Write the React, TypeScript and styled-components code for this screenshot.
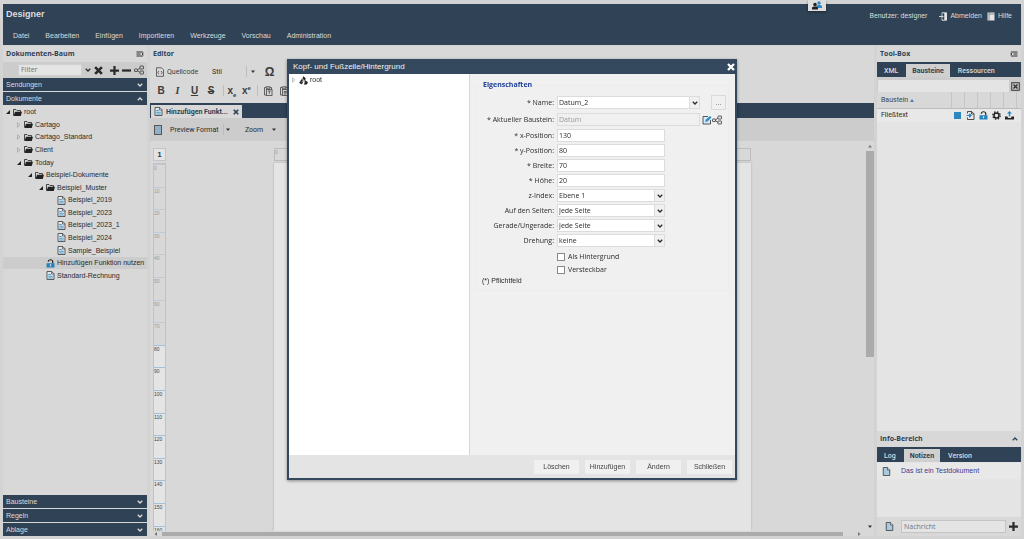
import React from "react";
import styled, { createGlobalStyle, css } from "styled-components";

const navy = "#2f4256";
const ink = "#2b2b2b";
const panel = "#d8d8d8";
const shade = "#cccccc";
const light = "#e4e4e4";
const arial = '"Liberation Sans", Arial, sans-serif';
const humanist = '"Open Sans", "Noto Sans", sans-serif';
const roboto = 'Roboto, "Liberation Sans", sans-serif';

const GlobalStyle = createGlobalStyle`
  * { box-sizing: border-box; }
  html, body { margin: 0; background: #d3d3d3; }
  body { font: 7px/10px ${arial}; color: ${ink}; overflow: hidden; }
  button, input, select { font: inherit; color: inherit; margin: 0; border-radius: 0; }
  svg { display: block; flex: none; }
  h1, h2, h3, p, ul { margin: 0; padding: 0; font-size: inherit; }
`;

/* ---------- icons ---------- */
type IconProps = { size?: number };

const Chevron = ({ up, size = 6 }: IconProps & { up?: boolean }) => (
  <svg width={size} height={size} viewBox="0 0 12 12" fill="none" stroke="currentColor" strokeWidth="2.6">
    <path d={up ? "M1.500 8.500l4.500-4.500 4.500 4.500" : "M1.500 3.500l4.500 4.500 4.500-4.500"} />
  </svg>
);
const Cross = ({ size = 8 }: IconProps) => (
  <svg width={size} height={size} viewBox="0 0 16 16" fill="none" stroke="currentColor" strokeWidth="4.6">
    <path d="M2 2l12 12M14 2L2 14" />
  </svg>
);
const Plus = ({ size = 9 }: IconProps) => (
  <svg width={size} height={size} viewBox="0 0 16 16" fill="currentColor">
    <path d="M6 0h4v6h6v4h-6v6H6v-6H0V6h6z" />
  </svg>
);
const Minus = ({ size = 9 }: IconProps) => (
  <svg width={size} height={size} viewBox="0 0 16 16" fill="currentColor">
    <path d="M0 6h16v4H0z" />
  </svg>
);
const Share = ({ size = 10 }: IconProps) => (
  <svg width={size} height={size} viewBox="0 0 20 20" fill="none" stroke="#444" strokeWidth="1.8">
    <rect x="1" y="8" width="6" height="5" rx="1" />
    <rect x="12" y="2" width="7" height="6" rx="1" />
    <rect x="12" y="12" width="7" height="6" rx="1" />
    <path d="M7 10l5-4M7 11l5 4" />
  </svg>
);
const Collapse = ({ flip }: { flip?: boolean }) => (
  <svg width="8" height="8" viewBox="0 0 16 16" fill="none" stroke="#222" strokeWidth="1.8">
    <g transform={flip ? "translate(16 0) scale(-1 1)" : undefined}>
      <path d="M1 4h13M1 8h8M1 12h13" />
      <path d="M15 6l-3 2 3 2" />
    </g>
  </svg>
);
const Folder = () => (
  <svg width="9" height="9" viewBox="0 0 18 18">
    <path d="M1 15V3h5l2 2h7v3" fill="none" stroke="#222" strokeWidth="1.6" />
    <path d="M4 7.500H18L15.500 16H1z" fill="#222" />
  </svg>
);
const Doc = ({ size = 9 }: IconProps) => (
  <svg width={size} height={size} viewBox="0 0 18 18">
    <path d="M2 1h9.500L16 5.500V17H2z" fill="#e2e8ec" stroke="#444" strokeWidth="1.7" />
    <path d="M11 1v5h5" fill="none" stroke="#444" strokeWidth="1.4" />
    <path d="M4.500 7h5M4.500 10.500h9M4.500 14h9" stroke="#4a97c9" strokeWidth="2" />
  </svg>
);
const Sheet = ({ size = 9 }: IconProps) => (
  <svg width={size} height={size} viewBox="0 0 18 18">
    <path d="M2.500 1h8.500l4.500 4.500V17h-13z" fill="#a9c9df" stroke="#444" strokeWidth="1.7" />
    <path d="M11 1v5h5" fill="#e4e4e4" stroke="#444" strokeWidth="1.4" />
  </svg>
);
const Lock = ({ size = 9 }: IconProps) => (
  <svg width={size} height={size} viewBox="0 0 18 18">
    <path d="M4.500 5.500a4.500 4 0 0 1 9 0V9" fill="none" stroke="#222" strokeWidth="2.400" />
    <path d="M1 8.500h16V17H1z" fill="#2583bd" />
    <path d="M9 10.500v4" stroke="#e4e4e4" strokeWidth="2.400" />
  </svg>
);
const Twist = ({ open }: { open: boolean }) => (
  <svg width="6" height="6" viewBox="0 0 12 12">
    {open ? <path d="M10 2v8H2z" fill="#222" /> : <path d="M3 1.500l5 4.500-5 4.500z" fill="none" stroke="#999" strokeWidth="1.2" />}
  </svg>
);
const Caret = () => (
  <svg width="4" height="3" viewBox="0 0 8 6"><path d="M0 1h8L4 6z" fill="#333" /></svg>
);

/* ---------- page frame ---------- */
const Page = styled.div`
  height: 100vh;
  display: flex;
  flex-direction: column;
  gap: 1px;
  padding: 4px 3px 3px;
`;
const Header = styled.header`
  flex: none;
  height: 41px;
  background: ${navy};
  color: #dcdcdc;
  display: flex;
  justify-content: space-between;
`;
const Brand = styled.h1`
  font: bold 9px/12px ${arial};
  padding: 4px 3px 11px;
`;
const Menu = styled.nav`
  display: flex;
  gap: 16px;
  padding-left: 10px;
`;
const HeadLink = styled.a`
  display: flex;
  align-items: center;
  gap: 3px;
  color: inherit;
  text-decoration: none;
`;
const UserBar = styled.div`
  display: flex;
  height: 10px;
  align-items: center;
  gap: 5px;
  margin: 7px 9px 0 0;
`;
const UserName = styled.span`
  margin-right: 7px;
  font-family: ${roboto};
`;
const Presence = styled.div`
  position: absolute;
  top: 0;
  right: 198px;
  width: 18px;
  height: 11px;
  display: grid;
  place-items: center;
  background: #dedede;
  box-shadow: 0 1px 2px #1118;
`;
const Columns = styled.main`
  flex: 1;
  min-height: 0;
  display: grid;
  grid-template-columns: 144px minmax(0, 1fr) 144px;
  gap: 3px;
`;
const Column = styled.section`
  display: flex;
  flex-direction: column;
  min-height: 0;
  min-width: 0;
  background: ${panel};
`;
const PanelTitle = styled.h2`
  flex: none;
  height: 16px;
  display: flex;
  align-items: center;
  justify-content: space-between;
  padding: 0 3px;
  color: ${navy};
  font: bold 7px/10px ${humanist};
`;
const IconButton = styled.button`
  flex: none;
  border: 0;
  padding: 0;
  background: none;
  display: grid;
  place-items: center;
`;

/* ---------- document tree ---------- */
const FilterBar = styled.div`
  flex: none;
  height: 16px;
  display: flex;
  align-items: center;
  gap: 3px;
  padding: 0 3px 0 15px;
  background: ${shade};
`;
const ClearButton = styled(IconButton)`
  margin-right: 4px;
`;
const FilterInput = styled.input`
  flex: 1;
  min-width: 0;
  height: 12px;
  margin-bottom: 1px;
  padding: 0 2px;
  border: 1px solid #d0d0d0;
  background: ${light};
  font-family: ${humanist};
`;
const AccordionHead = styled.button`
  flex: none;
  height: 13px;
  margin-bottom: 1px;
  padding: 0 4px 0 3px;
  border: 0;
  display: flex;
  align-items: center;
  justify-content: space-between;
  background: ${navy};
  color: #dcdcdc;
  &:last-child { margin-bottom: 0; }
`;
const TreeArea = styled.div`
  flex: 1;
  min-height: 0;
  overflow: hidden;
`;
const Tree = styled.ul`
  list-style: none;
  display: grid;
  height: 176px;
  grid-auto-rows: 1fr;
`;
const TreeRow = styled.li<{ $level: number; $active?: boolean }>`
  display: flex;
  align-items: center;
  gap: 2px;
  padding-left: ${(p) => 2 + p.$level * 11}px;
  white-space: nowrap;
  background: ${(p) => (p.$active ? "#cccccc" : "none")};
`;
const TwistSlot = styled.span`
  flex: none;
  width: 6px;
`;

type Node = { label: string; level: number; kind: "open" | "closed" | "doc" | "lock" };
const nodes: Node[] = [
  { label: "root", level: 0, kind: "open" },
  { label: "Cartago", level: 1, kind: "closed" },
  { label: "Cartago_Standard", level: 1, kind: "closed" },
  { label: "Client", level: 1, kind: "closed" },
  { label: "Today", level: 1, kind: "open" },
  { label: "Beispiel-Dokumente", level: 2, kind: "open" },
  { label: "Beispiel_Muster", level: 3, kind: "open" },
  { label: "Beispiel_2019", level: 4, kind: "doc" },
  { label: "Beispiel_2023", level: 4, kind: "doc" },
  { label: "Beispiel_2023_1", level: 4, kind: "doc" },
  { label: "Beispiel_2024", level: 4, kind: "doc" },
  { label: "Sample_Beispiel", level: 4, kind: "doc" },
  { label: "Hinzufügen Funktion nutzen", level: 3, kind: "lock" },
  { label: "Standard-Rechnung", level: 3, kind: "doc" },
];

const DocumentTree = () => (
  <Column>
    <PanelTitle>Dokumenten-Baum<Collapse /></PanelTitle>
    <FilterBar>
      <FilterInput placeholder="Filter" aria-label="Filter" />
      <IconButton aria-label="Optionen"><Chevron /></IconButton>
      <ClearButton aria-label="Leeren"><Cross size={9} /></ClearButton>
      <IconButton aria-label="Aufklappen"><Plus /></IconButton>
      <IconButton aria-label="Zuklappen"><Minus /></IconButton>
      <IconButton aria-label="Struktur"><Share /></IconButton>
    </FilterBar>
    <AccordionHead>Sendungen<Chevron /></AccordionHead>
    <AccordionHead>Dokumente<Chevron up /></AccordionHead>
    <TreeArea>
      <Tree>
        {nodes.map((n) => (
          <TreeRow key={n.label} $level={n.level} $active={n.kind === "lock"}>
            <TwistSlot>{(n.kind === "open" || n.kind === "closed") && <Twist open={n.kind === "open"} />}</TwistSlot>
            {n.kind === "doc" ? <Doc /> : n.kind === "lock" ? <Lock /> : <Folder />}
            {n.label}
          </TreeRow>
        ))}
      </Tree>
    </TreeArea>
    {["Bausteine", "Regeln", "Ablage"].map((t) => (
      <AccordionHead key={t}>{t}<Chevron /></AccordionHead>
    ))}
  </Column>
);

/* ---------- editor ---------- */
const Ribbon = styled.div`
  flex: none;
  height: 41px;
  display: grid;
  grid-template-rows: 19px 19px;
  font-family: ${roboto};
`;
const RibbonRow = styled.div`
  display: flex;
  align-items: center;
  padding-left: 5px;
`;
const Tool = styled.button<{ $w?: number; $start?: boolean }>`
  width: ${(p) => (p.$w ? p.$w + "px" : "auto")};
  flex: none;
  border: 0;
  padding: 0;
  background: none;
  display: flex;
  align-items: center;
  justify-content: ${(p) => (p.$w && !p.$start ? "center" : "flex-start")};
  gap: 2px;
  color: #3c3c3c;
  white-space: nowrap;
`;
const Glyph = styled.span<{ $style?: "bold" | "italic" | "under" | "strike" }>`
  font: bold 10px/12px ${arial};
  ${(p) => p.$style === "italic" && css`font-family: "Liberation Serif", serif; font-style: italic;`}
  ${(p) => p.$style === "under" && css`text-decoration: underline;`}
  ${(p) => p.$style === "strike" && css`text-decoration: line-through;`}
  sub, sup { font-size: 6px; line-height: 0; }
`;
const Omega = styled.span`
  font: bold 12px/12px ${arial};
`;
const Divider = styled.span`
  flex: none;
  width: 1px;
  height: 11px;
  margin: 0 2px;
  background: #bdbdbd;
`;
const StyleName = styled.span`
  width: 32px;
  margin-left: 13px;
`;
const TabStrip = styled.div`
  flex: none;
  height: 15px;
  display: flex;
  padding: 2px 0 0 1px;
  background: ${navy};
`;
const DocTab = styled.div`
  display: flex;
  align-items: center;
  gap: 3px;
  width: 91px;
  padding: 0 3px;
  background: ${panel};
  color: ${navy};
  font: bold 7px/10px ${roboto};
  white-space: nowrap;
`;
const TabText = styled.span`
  flex: 1;
`;
const ViewBar = styled.div`
  flex: none;
  height: 23px;
  display: flex;
  align-items: center;
  padding-left: 4px;
  background: ${shade};
  font-family: ${roboto};
`;
const ViewLabel = styled.span<{ $w: number; $before: number }>`
  width: ${(p) => p.$w}px;
  margin-left: ${(p) => p.$before}px;
  white-space: nowrap;
`;
const Workspace = styled.div`
  flex: 1;
  min-height: 0;
  display: grid;
  grid-template: minmax(0, 1fr) 5px / minmax(0, 1fr) 9px;
`;
const Canvas = styled.div`
  display: grid;
  grid-template: 13px minmax(0, 1fr) / 13px minmax(0, 477px);
  gap: 2px 108px;
  padding: 7px 0 0 3px;
  overflow: hidden;
`;
const PageNumber = styled.div`
  display: grid;
  place-items: center;
  background: ${light};
  border: 1px solid #c4c4c4;
  color: ${navy};
  font: bold 8px/10px ${arial};
`;
const RulerX = styled.div`
  border: 1px solid #bcbcbc;
  color: #999;
  font-size: 5px;
  line-height: 6px;
`;
const RulerY = styled.ol`
  margin: 0;
  padding: 0;
  list-style: none;
  height: 386px;
  display: flex;
  flex-direction: column;
  border: 1px solid #c2c2c2;
`;
const Tick = styled.li<{ $on: boolean }>`
  flex: 1;
  border-top: 1px solid ${(p) => (p.$on ? "#a3c1dd" : "#bccbd9")};
  background: ${(p) => (p.$on ? light : "none")};
  color: ${(p) => (p.$on ? "#444" : "#999")};
  font-size: 5px;
  line-height: 6px;
`;
const Paper = styled.div`
  background: ${light};
  box-shadow: 0 0 2px #8888;
`;
const ScrollY = styled.div`
  display: flex;
  flex-direction: column;
  align-items: center;
  justify-content: space-between;
  padding: 4px 0 3px;
`;
const ThumbY = styled.div`
  width: 8px;
  height: 206px;
  margin: 3px 0 auto;
  background: #ababab;
`;
const ScrollX = styled.div`
  display: flex;
  align-items: center;
  justify-content: space-between;
  gap: 4px;
  padding: 0 4px;
`;
const ThumbX = styled.div`
  flex: 1;
  height: 4px;
  margin-right: 10px;
  background: #ababab;
`;
const ScrollArrow = ({ d }: { d: string }) => (
  <svg width="4" height="4" viewBox="0 0 8 8"><path d={d} fill="#777" /></svg>
);
const Clipboard = ({ text }: { text?: boolean }) => (
  <svg width="10" height="10" viewBox="0 0 20 20" fill="none" stroke="#555" strokeWidth="1.8">
    <path d="M6 3H3v15h3M14 3h3v3M6 1.500h8v3H6z" />
    <rect x="7" y="7" width="11" height="12" />
    {text ? <path d="M9.500 10h6M12.500 10v6" /> : <path d="M9.500 11h6M9.500 13.500h6M9.500 16h4" />}
  </svg>
);

const Editor = () => (
  <Column>
    <PanelTitle>Editor</PanelTitle>
    <Ribbon>
      <RibbonRow>
        <Tool $w={44} $start>
          <svg width="10" height="10" viewBox="0 0 20 20" fill="none" stroke="#555" strokeWidth="1.8">
            <path d="M3 1.500h10l4 4v13H3zM8 8l-2.500 3L8 14M12 8l2.500 3L12 14" />
          </svg>
          Quellcode
        </Tool>
        <StyleName>Stil</StyleName>
        <Divider />
        <Tool $w={8}><Caret /></Tool>
        <Tool $w={25}><Omega>Ω</Omega></Tool>
      </RibbonRow>
      <RibbonRow>
        <Tool $w={12}><Glyph>B</Glyph></Tool>
        <Tool $w={21}><Glyph $style="italic">I</Glyph></Tool>
        <Tool $w={13}><Glyph $style="under">U</Glyph></Tool>
        <Tool $w={20}><Glyph $style="strike">S</Glyph></Tool>
        <Divider />
        <Tool $w={12}><Glyph>x<sub>e</sub></Glyph></Tool>
        <Tool $w={17}><Glyph>x<sup>e</sup></Glyph></Tool>
        <Divider />
        <Tool $w={16}><Clipboard text /></Tool>
        <Tool $w={16}><Clipboard /></Tool>
      </RibbonRow>
    </Ribbon>
    <TabStrip>
      <DocTab>
        <Doc />
        <TabText>Hinzufügen Funkt...</TabText>
        <IconButton aria-label="Tab schließen"><Cross size={6} /></IconButton>
      </DocTab>
    </TabStrip>
    <ViewBar>
      <svg width="8" height="10" viewBox="0 0 16 20">
        <rect x="1" y="1" width="14" height="18" fill="#8fb0c8" stroke="#555" strokeWidth="2" />
      </svg>
      <ViewLabel $w={51} $before={8}>Preview Format</ViewLabel>
      <Divider />
      <Tool aria-label="Format wählen"><Caret /></Tool>
      <ViewLabel $w={27} $before={15}>Zoom</ViewLabel>
      <Tool aria-label="Zoom wählen"><Caret /></Tool>
    </ViewBar>
    <Workspace>
      <Canvas>
        <PageNumber>1</PageNumber>
        <RulerX>0</RulerX>
        <RulerY>
          {Array.from({ length: 17 }, (_, i) => (
            <Tick key={i} $on={i >= 8}>{i * 10}</Tick>
          ))}
        </RulerY>
        <Paper />
      </Canvas>
      <ScrollY>
        <svg width="4" height="3" viewBox="0 0 8 6"><path d="M0 5h8L4 0z" fill="#777" /></svg>
        <ThumbY />
        <Caret />
      </ScrollY>
      <ScrollX>
        <ScrollArrow d="M6 0v8L1 4z" />
        <ThumbX />
        <ScrollArrow d="M2 0v8l5-4z" />
      </ScrollX>
    </Workspace>
  </Column>
);

/* ---------- toolbox ---------- */
const Tabs = styled.div`
  flex: none;
  height: 15px;
  display: flex;
  gap: 2px;
  padding: 2px 0 0 1px;
  background: ${navy};
`;
const Tab = styled.button<{ $active?: boolean }>`
  border: 0;
  padding: 0 6px;
  background: ${(p) => (p.$active ? "#d0d0d0" : "none")};
  color: ${(p) => (p.$active ? navy : "#dcdcdc")};
  font: ${(p) => (p.$active ? "bold" : 500)} 7px/10px ${roboto};
`;
const SearchRow = styled.div`
  flex: none;
  display: flex;
  align-items: center;
  justify-content: space-between;
  height: 15px;
  padding: 3px 1px 0;
  background: ${shade};
`;
const Search = styled.input`
  flex: 1;
  min-width: 0;
  height: 12px;
  margin-right: 2px;
  border: 0;
  background: ${light};
`;
const BlockTable = styled.table`
  flex: none;
  width: 100%;
  border-collapse: collapse;
  table-layout: fixed;
  font-family: ${roboto};
  th { height: 16px; padding: 0; font-weight: normal; text-align: left; background: ${panel}; color: #444; border-bottom: 1px solid #bbb; }
  th + th { border-left: 1px solid #c6c6c6; }
  td { height: 14px; padding: 0; background: #e8e8e8; }
  th:first-child, td:first-child { padding-left: 4px; }
  td svg { margin: 0 auto; }
`;
const ColName = styled.col`
  width: 74px;
`;
const ColEnd = styled.col`
  width: 5px;
`;
const Sort = styled.span`
  display: inline-block;
  margin-left: 2px;
  border: 2px solid transparent;
  border-top: 0;
  border-bottom: 3px solid #4a7fb5;
`;
const Blank = styled.div`
  flex: 1;
  background: ${light};
`;
const Note = styled.div`
  flex: none;
  display: flex;
  align-items: center;
  gap: 10px;
  height: 16px;
  margin-top: 1px;
  padding-left: 5px;
  background: #e8e8e8;
  color: #43388f;
`;
const InfoBody = styled.div`
  flex: none;
  display: flex;
  flex-direction: column;
  height: 55px;
  background: ${light};
`;
const MessageRow = styled.div`
  flex: none;
  display: flex;
  align-items: center;
  height: 19px;
  padding: 0 3px 0 8px;
`;
const MessageInput = styled.input`
  flex: 1;
  min-width: 0;
  height: 13px;
  margin: 0 3px 0 7px;
  padding: 0 2px;
  border: 1px solid #c4c4c4;
  background: ${light};
  font-family: ${humanist};
`;

const ToolBox = () => (
  <Column>
    <PanelTitle>Tool-Box<Collapse flip /></PanelTitle>
    <Tabs>
      <Tab>XML</Tab>
      <Tab $active>Bausteine</Tab>
      <Tab>Ressourcen</Tab>
    </Tabs>
    <SearchRow>
      <Search aria-label="Baustein suchen" />
      <IconButton aria-label="Suche leeren">
        <svg width="9" height="9" viewBox="0 0 18 18" fill="none" stroke="#333">
          <rect x="1.500" y="1.500" width="15" height="15" strokeWidth="2" />
          <path d="M5 5l8 8M13 5l-8 8" strokeWidth="3" />
        </svg>
      </IconButton>
    </SearchRow>
    <BlockTable>
      <colgroup><ColName /><col /><col /><col /><col /><col /><ColEnd /></colgroup>
      <thead>
        <tr><th>Baustein<Sort /></th><th /><th /><th /><th /><th /><th /></tr>
      </thead>
      <tbody>
        <tr>
          <td>Fließtext</td>
          <td><svg width="7" height="7"><rect width="7" height="7" fill="#2f86bf" /></svg></td>
          <td>
            <svg width="9" height="9" viewBox="0 0 18 18" fill="none" stroke="#333" strokeWidth="1.7">
              <path d="M3 5V1h8.500L16 5.500V17H3v-4" /><path d="M11 1v5h5" /><path d="M1 9h9M6.500 5.500L10 9l-3.500 3.500" stroke="#2583bd" strokeWidth="2.400" />
            </svg>
          </td>
          <td><Lock size={9} /></td>
          <td>
            <svg width="9" height="9" viewBox="0 0 18 18" fill="none" stroke="#222">
              <circle cx="9" cy="9" r="5" strokeWidth="3" />
              <circle cx="9" cy="9" r="7.500" strokeWidth="2.500" strokeDasharray="3 2.890" />
            </svg>
          </td>
          <td>
            <svg width="9" height="9" viewBox="0 0 18 18">
              <path d="M0 11h5l1 3h6l1-3h5v6H0z" fill="#222" /><path d="M9 0l5 5h-3.500v6h-3V5H4z" fill="#2583bd" />
            </svg>
          </td>
          <td />
        </tr>
      </tbody>
    </BlockTable>
    <Blank />
    <PanelTitle>Info-Bereich<Chevron up /></PanelTitle>
    <Tabs>
      <Tab>Log</Tab>
      <Tab $active>Notizen</Tab>
      <Tab>Version</Tab>
    </Tabs>
    <InfoBody><Note><Sheet />Das ist ein Testdokument</Note></InfoBody>
    <MessageRow>
      <Sheet />
      <MessageInput placeholder="Nachricht" aria-label="Nachricht" />
      <IconButton aria-label="Nachricht hinzufügen"><Plus /></IconButton>
    </MessageRow>
  </Column>
);

/* ---------- dialog ---------- */
const Overlay = styled.div`
  position: fixed;
  inset: 0;
  display: grid;
  place-items: center;
`;
const Dialog = styled.div`
  width: 450px;
  height: 421px;
  display: flex;
  flex-direction: column;
  border: 2px solid #34495e;
  border-top: 0;
  background: #f0f0f0;
  box-shadow: 0 1px 3px #0006;
`;
const DialogTitle = styled.h2`
  flex: none;
  height: 15px;
  display: flex;
  align-items: center;
  justify-content: space-between;
  padding: 0 0 0 4px;
  background: #34495e;
  color: #f2f2f2;
  font: 8px/10px ${arial};
`;
const DialogBody = styled.div`
  flex: 1;
  display: grid;
  grid-template-columns: 181px minmax(0, 1fr);
`;
const DialogTree = styled.div`
  border-right: 1px solid #c3daf0;
  background: #fff;
  padding: 0 2px;
`;
const RootRow = styled.div`
  display: flex;
  align-items: center;
  gap: 2px;
  height: 12px;
`;
const Fields = styled.fieldset`
  margin: 6px 6px 0 5px;
  height: 211px;
  padding: 5px 2px 0 6px;
  border: 1px solid #ececec;
  font-family: ${humanist};
`;
const Legend = styled.legend`
  padding: 0 1px;
  color: #20409a;
  font-weight: bold;
`;
const FieldGrid = styled.div`
  display: grid;
  gap: 2px;
`;
const Field = styled.div<{ $tall?: boolean }>`
  display: grid;
  grid-template-columns: 72px minmax(0, 1fr);
  column-gap: 3px;
  align-items: center;
  height: ${(p) => (p.$tall ? 15 : 13)}px;
`;
const FieldLabel = styled.label`
  text-align: right;
  white-space: nowrap;
`;
const Controls = styled.div`
  display: flex;
  align-items: center;
`;
const boxed = css<{ $wide?: boolean }>`
  width: ${(p) => (p.$wide ? 143 : 108)}px;
  height: 13px;
  padding: 0 1px;
  border: 1px solid #dcdcdc;
  background: #fff;
`;
const TextBox = styled.input<{ $wide?: boolean }>`
  ${boxed}
  &:disabled { background: #f0f0f0; color: #999; }
`;
const SelectWrap = styled.div`
  position: relative;
  display: flex;
`;
const Select = styled.select<{ $wide?: boolean }>`
  ${boxed}
  appearance: none;
`;
const SelectArrow = styled.span`
  position: absolute;
  inset: 0 0 0 auto;
  width: 11px;
  display: grid;
  place-items: center;
  border: 1px solid #dcdcdc;
  background: #f0f0f0;
  pointer-events: none;
`;
const MoreButton = styled.button`
  width: 15px;
  height: 15px;
  margin-left: 11px;
  padding: 0;
  border: 1px solid #dadada;
  background: #f0f0f0;
  color: #777;
`;
const Checks = styled.div`
  display: grid;
  gap: 2px;
  padding: 2px 0 0 75px;
`;
const CheckLine = styled.label`
  display: flex;
  align-items: center;
  gap: 3px;
  height: 11px;
`;
const CheckBox = styled.input`
  appearance: none;
  width: 8px;
  height: 8px;
  border: 1px solid #888;
  background: #fff;
`;
const Hint = styled.p`
  font-family: ${arial};
  line-height: 8px;
`;
const DialogFooter = styled.footer`
  flex: none;
  height: 23px;
  display: flex;
  justify-content: flex-end;
  align-items: center;
  gap: 6px;
  padding: 1px 3px 0 0;
  background: #e4e4e4;
`;
const ActionButton = styled.button`
  width: 45px;
  height: 14px;
  padding: 0;
  border: 0;
  background: #f0f0f0;
  color: #444;
`;

const Dropdown = ({ id, value, wide }: { id: string; value: string; wide?: boolean }) => (
  <SelectWrap>
    <Select id={id} $wide={wide} defaultValue={value}><option>{value}</option></Select>
    <SelectArrow><Chevron /></SelectArrow>
  </SelectWrap>
);

const HeaderDialog = () => (
  <Overlay>
    <Dialog role="dialog" aria-labelledby="dialog-title">
      <DialogTitle id="dialog-title">
        Kopf- und Fußzeile/Hintergrund
        <IconButton aria-label="Schließen"><svg width="8" height="8" viewBox="0 0 16 16"><path d="M2 2l12 12M14 2L2 14" stroke="#fff" strokeWidth="4.600" /></svg></IconButton>
      </DialogTitle>
      <DialogBody>
        <DialogTree>
          <RootRow>
            <Twist open={false} />
            <svg width="9" height="9" viewBox="0 0 18 18">
              <path d="M9 1l4 4-2 4-4-2zM5 7l3 3-2 6-5-2zM12 9l5 3-1 4-5 1z" fill="#222" stroke="#222" />
              <path d="M8 6l4 7M5 12l5-3" stroke="#bbb" strokeWidth="1.500" />
            </svg>
            root
          </RootRow>
        </DialogTree>
        <Fields>
          <Legend>Eigenschaften</Legend>
          <FieldGrid>
            <Field $tall>
              <FieldLabel htmlFor="name">* Name:</FieldLabel>
              <Controls><Dropdown id="name" value="Datum_2" wide /><MoreButton>...</MoreButton></Controls>
            </Field>
            <Field $tall>
              <FieldLabel htmlFor="block">* Aktueller Baustein:</FieldLabel>
              <Controls>
                <TextBox id="block" $wide disabled defaultValue="Datum" />
                <IconButton aria-label="Bearbeiten">
                  <svg width="12" height="10" viewBox="-4 0 24 20">
                    <path d="M12 3H2v15h15v-8" fill="#dcebf5" stroke="#444" strokeWidth="1.800" />
                    <path d="M6 14l2-5 8-7 3 3-8 8z" fill="#2b8ccc" />
                  </svg>
                </IconButton>
                <IconButton aria-label="Struktur"><Share /></IconButton>
              </Controls>
            </Field>
            {[["x-Position", "130"], ["y-Position", "80"], ["Breite", "70"], ["Höhe", "20"]].map(([l, v]) => (
              <Field key={l}>
                <FieldLabel htmlFor={l}>* {l}:</FieldLabel>
                <TextBox id={l} defaultValue={v} />
              </Field>
            ))}
            {[["z-Index", "Ebene 1"], ["Auf den Seiten", "Jede Seite"], ["Gerade/Ungerade", "Jede Seite"], ["Drehung", "keine"]].map(([l, v]) => (
              <Field key={l}>
                <FieldLabel htmlFor={l}>{l}:</FieldLabel>
                <Controls><Dropdown id={l} value={v} /></Controls>
              </Field>
            ))}
            <Checks>
              <CheckLine><CheckBox type="checkbox" />Als Hintergrund</CheckLine>
              <CheckLine><CheckBox type="checkbox" />Versteckbar</CheckLine>
            </Checks>
            <Hint>(*) Pflichtfeld</Hint>
          </FieldGrid>
        </Fields>
      </DialogBody>
      <DialogFooter>
        {["Löschen", "Hinzufügen", "Ändern", "Schließen"].map((t) => (
          <ActionButton key={t}>{t}</ActionButton>
        ))}
      </DialogFooter>
    </Dialog>
  </Overlay>
);

export default function App() {
  return (
    <>
      <GlobalStyle />
      <Page>
        <Header>
          <div>
            <Brand>Designer</Brand>
            <Menu>
              {["Datei", "Bearbeiten", "Einfügen", "Importieren", "Werkzeuge", "Vorschau", "Administration"].map((m) => (
                <HeadLink key={m} href="#">{m}</HeadLink>
              ))}
            </Menu>
          </div>
          <UserBar>
            <UserName>Benutzer: designer</UserName>
            <HeadLink href="#">
              <svg width="8" height="9" viewBox="0 0 16 18">
                <path d="M6 5V1.500h9v15H6V13M0 9h8M4.500 5.500L8 9l-3.500 3.500" fill="none" stroke="#e4e4e4" strokeWidth="1.800" />
                <path d="M10.500 2h5v14h-5z" fill="#e4e4e4" />
              </svg>
              Abmelden
            </HeadLink>
            <HeadLink href="#">
              <svg width="8" height="9" viewBox="0 0 16 18">
                <path d="M1 1h14v16H1z" fill="#e4e4e4" /><path d="M4 1v16M4 4h11" stroke={navy} strokeWidth="1" />
              </svg>
              Hilfe
            </HeadLink>
          </UserBar>
        </Header>
        <Columns>
          <DocumentTree />
          <Editor />
          <ToolBox />
        </Columns>
      </Page>
      <Presence>
        <svg width="10" height="9" viewBox="0 0 20 18">
          <circle cx="14" cy="4" r="3.500" fill="#2b8ccc" /><path d="M9 14V9l3-1h5l3 2v4z" fill="#2b8ccc" />
          <circle cx="6" cy="7" r="3.500" fill="#222" /><path d="M0 17v-4l3-2h6l3 2v4z" fill="#222" />
        </svg>
      </Presence>
      <HeaderDialog />
    </>
  );
}
